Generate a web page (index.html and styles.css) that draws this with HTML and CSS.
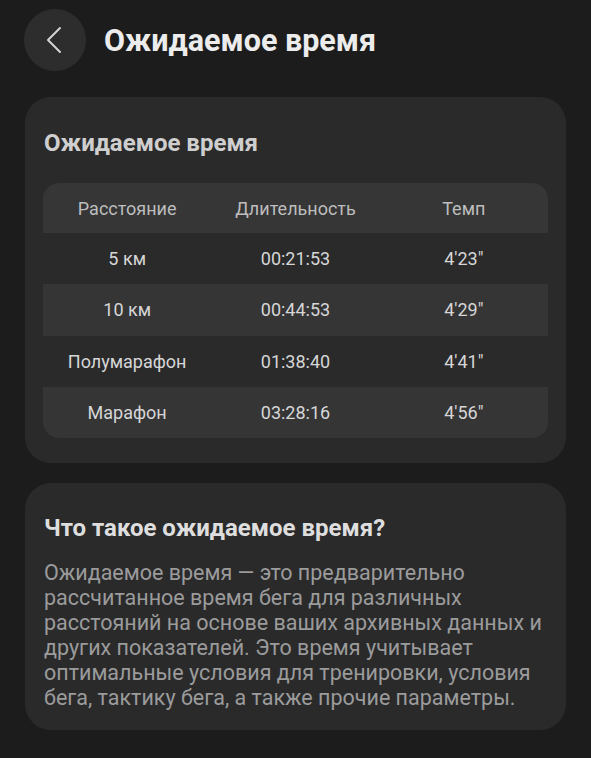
FILE: index.html
```html
<!DOCTYPE html>
<html>
  <head>
    <meta charset="utf-8" />
    <meta name="viewport" content="width=device-width, initial-scale=1.0" />
    <title>Ожидаемое время</title>
    <link rel="stylesheet" href="styles.css">
  </head>
  <body>
    <header class="top-bar">
      <button class="back" aria-label="Назад">
        <svg width="20" height="30" viewBox="0 0 20 30">
          <path d="M15 3 L3 15 L15 27" fill="none" stroke="#d4d4d4" stroke-width="2" stroke-linecap="round" stroke-linejoin="round" />
        </svg>
      </button>
      <h1>Ожидаемое время</h1>
    </header>

    <section class="card">
      <h2>Ожидаемое время</h2>
      <div class="table">
        <div class="row head">
          <span>Расстояние</span>
          <span>Длительность</span>
          <span>Темп</span>
        </div>
        <div class="row">
          <span>5 км</span>
          <span>00:21:53</span>
          <span>4'23"</span>
        </div>
        <div class="row alt">
          <span>10 км</span>
          <span>00:44:53</span>
          <span>4'29"</span>
        </div>
        <div class="row">
          <span>Полумарафон</span>
          <span>01:38:40</span>
          <span>4'41"</span>
        </div>
        <div class="row alt">
          <span>Марафон</span>
          <span>03:28:16</span>
          <span>4'56"</span>
        </div>
      </div>
    </section>

    <section class="card info">
      <h2>Что такое ожидаемое время?</h2>
      <p>
        Ожидаемое время — это предварительно рассчитанное время бега для
        различных расстояний на основе ваших архивных данных и других
        показателей. Это время учитывает оптимальные условия для тренировки,
        условия бега, тактику бега, а также прочие параметры.
      </p>
    </section>
  </body>
</html>
```

FILE: styles.css
```css
body {
  margin: 0;
  padding: 9px 25px 0;
  background: #1c1c1d;
  font-family: Roboto, "Noto Sans", sans-serif;
  color: #e6e6e6;
}
.top-bar {
  display: flex;
  align-items: center;
  gap: 18px;
  height: 62px;
  margin-bottom: 26px;
}
.back {
  width: 62px;
  height: 62px;
  margin-left: -1px;
  border: none;
  border-radius: 50%;
  background: #2d2d2e;
  display: flex;
  align-items: center;
  justify-content: center;
  padding: 0;
}
h1 {
  margin: 0;
  font-size: 30.5px;
  font-weight: 700;
  color: #ececec;
}
.card {
  background: #2a2a2b;
  border-radius: 26px;
  padding: 32px 18px 25px;
  margin-bottom: 20px;
}
.card h2 {
  margin: 0 0 26px 1px;
  font-size: 24px;
  line-height: 28px;
  font-weight: 700;
  color: #cfcfcf;
}
.table {
  border-radius: 16px;
  overflow: hidden;
}
.row {
  display: grid;
  grid-template-columns: 1fr 1fr 1fr;
  height: 51.25px;
  align-items: center;
  text-align: center;
  font-size: 18px;
  color: #d6d6d6;
}
.row.head {
  height: 50px;
  background: #363637;
  color: #bdbdbd;
}
.row.alt {
  background: #353536;
}
.info {
  padding-top: 31px;
  padding-bottom: 20px;
}
.info h2 {
  color: #dedede;
  margin-bottom: 18px;
}
.info p {
  margin: 0 0 0 1px;
  font-size: 21.5px;
  line-height: 25px;
  color: #9b9b9b;
}
```
